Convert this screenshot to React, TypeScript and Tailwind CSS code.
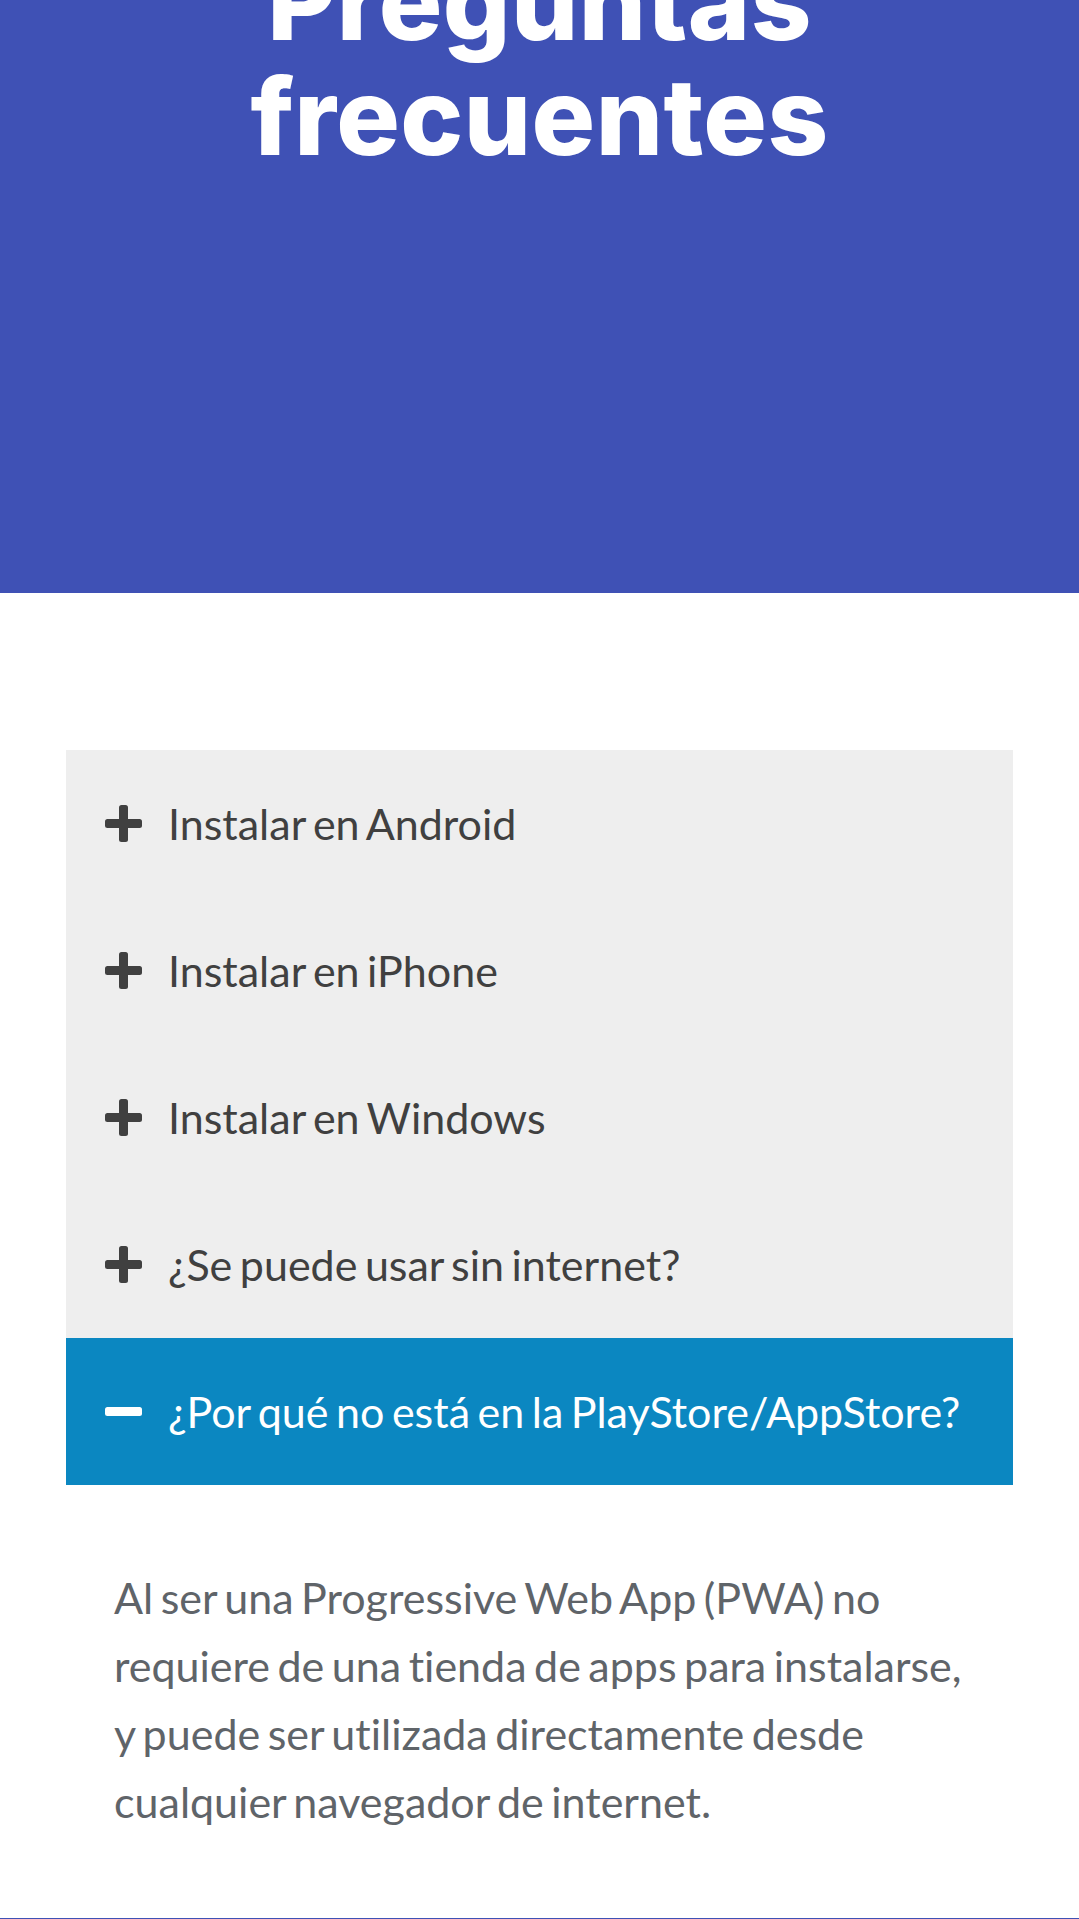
import { useState } from 'react';

const items = [
  { q: 'Instalar en Android', a: 'Abre el sitio en Chrome y toca "Agregar a pantalla de inicio".' },
  { q: 'Instalar en iPhone', a: 'Abre el sitio en Safari, toca Compartir y luego "Agregar a inicio".' },
  { q: 'Instalar en Windows', a: 'Abre el sitio en Edge o Chrome y usa el botón de instalar de la barra de direcciones.' },
  { q: '¿Se puede usar sin internet?', a: 'Sí, una vez cargada la app funciona sin conexión.' },
  {
    q: '¿Por qué no está en la PlayStore/AppStore?',
    a: 'Al ser una Progressive Web App (PWA) no requiere de una tienda de apps para instalarse, y puede ser utilizada directamente desde cualquier navegador de internet.',
  },
];

function ToggleIcon({ open }: { open: boolean }) {
  return (
    <svg className="w-[37px] h-[37px] shrink-0" viewBox="0 0 37 37" fill="currentColor">
      <rect x="0" y="14" width="37" height="9" rx="2.5" />
      {!open && <rect x="14" y="0" width="9" height="37" rx="2.5" />}
    </svg>
  );
}

export default function App() {
  const [openIdx, setOpenIdx] = useState<number>(4);

  return (
    <div
      className="min-h-screen bg-white overflow-hidden [font-variant-ligatures:none]"
      style={{ fontFamily: 'Lato, "Open Sans", sans-serif' }}
    >
      <section className="bg-[#3f51b5] h-[593px] flex flex-col">
        <h1
          className="-mt-[56px] text-center text-white font-extrabold text-[106px] leading-[115px] tracking-[0.004em]"
          style={{ fontFamily: 'Inter, "Open Sans", sans-serif' }}
        >
          Preguntas
          <br />
          frecuentes
        </h1>
      </section>

      <div className="px-[66px] pt-[157px]">
        {items.map((it, i) => {
          const open = i === openIdx;
          return (
            <div key={i}>
              <button
                onClick={() => setOpenIdx(open ? -1 : i)}
                className={`w-full h-[147px] flex items-center gap-[26px] pl-[39px] pr-6 text-left text-[43px] leading-[52px] [word-spacing:-3.5px] ${
                  open ? 'bg-[#0b87c1] text-white' : 'bg-[#eeeeee] text-[#404040]'
                }`}
              >
                <ToggleIcon open={open} />
                <span>{it.q}</span>
              </button>
              {open && (
                <div className="pl-12 pr-[40px] pt-[79px] pb-[82px]">
                  <p className="text-[43px] leading-[68px] text-[#5f6469] [word-spacing:-3.5px]">{it.a}</p>
                </div>
              )}
            </div>
          );
        })}
      </div>

      <section className="bg-[#3f51b5] h-[200px]" />
    </div>
  );
}
